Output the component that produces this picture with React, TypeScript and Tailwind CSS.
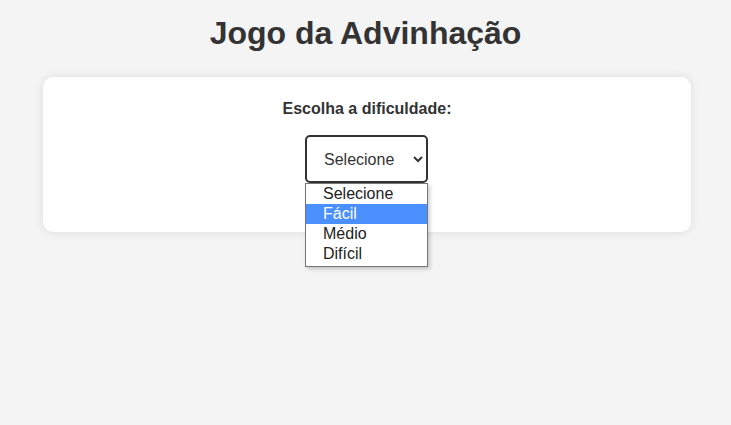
import React from 'react';

const options = ['Selecione', 'Fácil', 'Médio', 'Difícil'];

export default function App() {
  const highlighted = 1;

  return (
    <div className="min-h-[425px] bg-[#f4f4f4] pt-[15px] font-['Liberation_Sans',Arial,sans-serif] text-[#333]">
      <h1 className="text-center text-[32px] font-bold leading-[37px]">Jogo da Advinhação</h1>

      <div className="ml-[43px] mt-[25px] w-[648px] h-[155px] rounded-[10px] bg-white pt-[23px] shadow-[0_0_10px_rgba(0,0,0,0.1)]">
        <label className="block text-center text-base font-bold leading-[18px]">Escolha a dificuldade:</label>

        <div className="mt-[17px] flex justify-center">
          <div className="relative mr-[1px]">
            <select
              defaultValue=""
              className="block h-[48px] w-[123px] rounded-[5px] border-2 border-[#333] bg-white pl-[13px] pr-[8px] text-base text-[#333]"
            >
              <option value="">Selecione</option>
              <option value="facil">Fácil</option>
              <option value="medio">Médio</option>
              <option value="dificil">Difícil</option>
            </select>

            {/* open dropdown list */}
            <ul className="absolute left-0 top-[48px] z-10 w-[123px] border border-[#767676] bg-white pb-[2px] shadow-[2px_2px_4px_rgba(0,0,0,0.2)]">
              {options.map((opt, i) => (
                <li
                  key={opt}
                  className={
                    i === highlighted
                      ? 'h-[20px] bg-[#4a91ff] pl-[17px] text-base leading-[20px] text-white'
                      : 'h-[20px] pl-[17px] text-base leading-[20px] text-[#222]'
                  }
                >
                  {opt}
                </li>
              ))}
            </ul>
          </div>
        </div>
      </div>
    </div>
  );
}
